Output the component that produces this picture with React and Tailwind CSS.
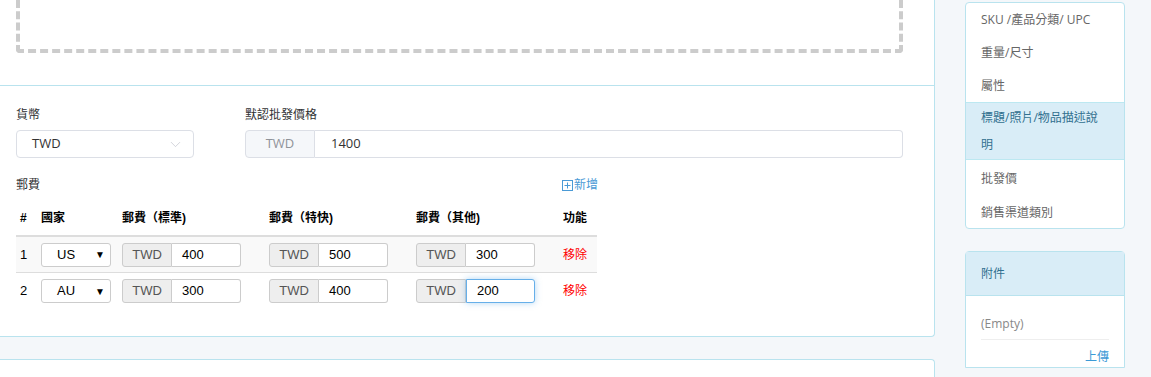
import React from "react";
import { ChevronDown } from "lucide-react";

const cjk = { fontFamily: '"Open Sans", "Noto Sans CJK TC", sans-serif' };
const tableFont = { fontFamily: '"Liberation Sans", "Noto Sans CJK TC", sans-serif' };

const rows = [
  { id: 1, country: "US", std: "400", fast: "500", other: "300" },
  { id: 2, country: "AU", std: "300", fast: "400", other: "200", focus: true },
];

const menu = [
  "SKU /產品分類/ UPC",
  "重量/尺寸",
  "屬性",
  "標題/照片/物品描述說明",
  "批發價",
  "銷售渠道類別",
];

function MoneyInput({ value, focus }) {
  return (
    <div className="flex h-[24px] w-[119px] text-[13px]">
      <div className="w-[50px] flex items-center justify-center bg-[#eeeeee] border border-[#cccccc] rounded-l-[3px] text-[#555]">
        TWD
      </div>
      <div
        className={
          focus
            ? "flex-1 flex items-center pl-[10px] bg-white border border-[#66afe9] rounded-r-[3px] text-black shadow-[0_0_6px_rgba(102,175,233,0.5)]"
            : "flex-1 flex items-center pl-[10px] bg-white border border-l-0 border-[#cccccc] rounded-r-[3px] text-black"
        }
      >
        {value}
      </div>
    </div>
  );
}

export default function App() {
  return (
    <div className="w-[1151px] h-[377px] overflow-hidden bg-[#f4f7fa] flex" style={cjk}>
      {/* main column */}
      <div className="w-[935px] shrink-0">
        <div className="bg-white border-r border-b border-[#b9e3ee] rounded-br-[4px]">
          <div className="pl-4 pr-[31px] pb-[32px] border-b border-[#b9e3ee]">
            <div className="h-[53px] border-4 border-t-0 border-dashed border-[#cccccc] rounded-b-[4px]"></div>
          </div>

          <div className="pl-4 pr-[31px] pt-[19px] pb-[27px] text-[12px] text-[#303133]">
            <div className="flex">
              <div className="w-[178px]">
                <div className="leading-[20px] mb-[5px]">貨幣</div>
                <div className="h-[28px] flex items-center justify-between pl-[15px] pr-[9px] border border-[#dcdfe6] rounded-[4px] text-[13px] text-[#333]">
                  <span>TWD</span>
                  <ChevronDown size={17} strokeWidth={1} className="text-[#c0c4cc]" />
                </div>
              </div>
              <div className="ml-[51px] flex-1">
                <div className="leading-[20px] mb-[5px]">默認批發價格</div>
                <div className="h-[28px] flex text-[13px]">
                  <div className="w-[70px] flex items-center justify-center bg-[#f5f7fa] border border-[#dcdfe6] rounded-l-[4px] text-[#909399]">
                    TWD
                  </div>
                  <div className="flex-1 flex items-center pl-[16px] border border-l-0 border-[#dcdfe6] rounded-r-[4px] text-[#333]">
                    1400
                  </div>
                </div>
              </div>
            </div>

            <div className="w-[582px] mt-[17px] flex items-center justify-between leading-[20px]">
              <span>郵費</span>
              <span className="flex items-center gap-[1px] text-[#4a9ad6]">
                <svg width="11" height="11" viewBox="0 0 11 11" fill="none" stroke="currentColor" strokeWidth="1">
                  <rect x="0.5" y="0.5" width="10" height="10" />
                  <path d="M5.5 2.5v6M2.5 5.5h6" />
                </svg>
                新增
              </span>
            </div>

            <div className="w-[581px] mt-[6px]" style={tableFont}>
              <div className="grid grid-cols-[25px_81px_147px_147px_147px_34px] h-[36px] items-center border-b-2 border-[#dddddd] font-bold text-[12px] text-black">
                <div className="pl-1">#</div>
                <div>國家</div>
                <div>郵費（標準)</div>
                <div>郵費（特快)</div>
                <div>郵費（其他)</div>
                <div>功能</div>
              </div>
              {rows.map((r, i) => (
                <div
                  key={r.id}
                  className={
                    i === 0
                      ? "grid grid-cols-[25px_81px_147px_147px_147px_34px] h-[36px] items-center border-b border-[#dddddd] bg-[#f9f9f9]"
                      : "grid grid-cols-[25px_81px_147px_147px_147px_34px] h-[36px] items-center"
                  }
                >
                  <div className="pl-1 text-[13px] text-black">{r.id}</div>
                  <div>
                    <div className="w-[70px] h-[24px] flex items-center justify-between pl-[15px] pr-[5px] bg-white border border-[#cccccc] rounded-[3px] text-[13px] text-black">
                      <span>{r.country}</span>
                      <span className="text-[10px]">▼</span>
                    </div>
                  </div>
                  <div><MoneyInput value={r.std} /></div>
                  <div><MoneyInput value={r.fast} /></div>
                  <div><MoneyInput value={r.other} focus={r.focus} /></div>
                  <div className="text-[12px] text-[#ff0000]">移除</div>
                </div>
              ))}
            </div>
          </div>
        </div>
        <div className="mt-[22px] h-[40px] bg-white border-t border-r border-[#b9e3ee] rounded-tr-[4px]"></div>
      </div>

      {/* sidebar */}
      <div className="ml-[30px] w-[160px] shrink-0 pt-[2px] text-[12px]">
        <div className="bg-white border border-[#b9e3ee] rounded-[4px] overflow-hidden text-[#666]">
          {menu.map((m, i) =>
            i === 3 ? (
              <div key={m} className="px-[15px] py-px leading-[27px] bg-[#d9edf7] text-[#31708f] border-y border-[#bce8f1]">
                {m}
              </div>
            ) : (
              <div key={m} className={i < 3 ? "h-[33px] flex items-center px-[15px]" : "h-[34px] flex items-center pt-[4px] px-[15px]"}>
                {m}
              </div>
            )
          )}
        </div>

        <div className="mt-[22px] bg-white border border-[#b9e3ee] rounded-t-[4px]">
          <div className="h-[44px] flex items-center px-[15px] bg-[#d9edf7] border-b border-[#b9e3ee] text-[#31708f]">
            附件
          </div>
          <div className="px-[15px] pt-[18px]">
            <div className="pb-[5px] border-b border-[#eeeeee] text-[#888] leading-[20px]">(Empty)</div>
            <div className="text-right text-[#3c9ad6] leading-[20px] pt-[7px]">上傳</div>
          </div>
        </div>
      </div>
    </div>
  );
}
